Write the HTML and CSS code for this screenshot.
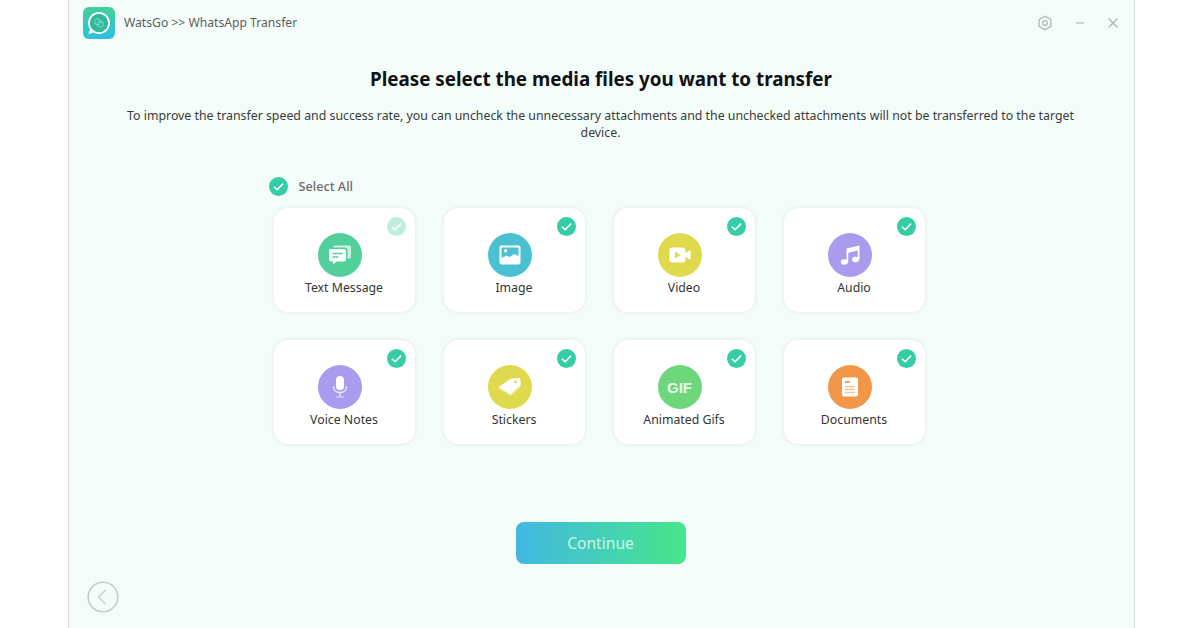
FILE: index.html
```html
<!DOCTYPE html>
<html lang="en">
<head>
    <meta charset="UTF-8">
    <meta name="viewport" content="width=device-width, initial-scale=1.0">
    <title>WatsGo</title>
    <link rel="stylesheet" href="styles.css">
</head>
<body>
    <div class="window">
        <!-- Title bar -->
        <header class="titlebar">
            <svg class="logo" width="32" height="32" viewBox="0 0 32 32">
                <defs>
                    <linearGradient id="logoGrad" x1="0" y1="0" x2="0" y2="1">
                        <stop offset="0" stop-color="#45cf96"/>
                        <stop offset="1" stop-color="#2cc0e0"/>
                    </linearGradient>
                </defs>
                <rect width="32" height="32" rx="6" fill="url(#logoGrad)"/>
                <path d="M16 5a11 11 0 1 1-5.400 20.600L5.500 27l1.500-4.800A11 11 0 0 1 16 5z" fill="#fff"/>
                <circle cx="16" cy="16" r="9.200" fill="#30b99a"/>
                <circle cx="14.600" cy="14.800" r="3" fill="none" stroke="#7fdcc4" stroke-width="1"/>
                <circle cx="17.400" cy="17.200" r="3" fill="none" stroke="#7fdcc4" stroke-width="1"/>
            </svg>
            <span class="app-name">WatsGo &gt;&gt; WhatsApp Transfer</span>
            <div class="window-controls">
                <svg width="16" height="16" viewBox="0 0 16 16" fill="none" stroke="#b4b9b7" stroke-width="1.4">
                    <path d="M8 1.2l5.9 3.4v6.8L8 14.8l-5.9-3.4V4.6z"/>
                    <circle cx="8" cy="8" r="2.4"/>
                </svg>
                <svg width="12" height="12" viewBox="0 0 12 12" stroke="#b9bebc" stroke-width="1.3">
                    <path d="M2 6h8"/>
                </svg>
                <svg width="12" height="12" viewBox="0 0 12 12" stroke="#aeb3b1" stroke-width="1.3">
                    <path d="M1.5 1.5l9 9M10.5 1.5l-9 9"/>
                </svg>
            </div>
        </header>

        <main class="content">
            <h1 class="heading">Please select the media files you want to transfer</h1>
            <p class="intro">To improve the transfer speed and success rate, you can uncheck the unnecessary attachments and the unchecked attachments will not be transferred to the target device.</p>

            <div class="picker">
                <label class="select-all">
                    <svg class="check" viewBox="0 0 20 20"><circle cx="10" cy="10" r="10" fill="#35cda5"/><path d="M5.2 10.2l3.4 3.2 6.2-6.4" fill="none" stroke="#fff" stroke-width="1.6"/></svg>
                    <span>Select All</span>
                </label>

                <div class="media-grid">
                    <div class="media-card">
                        <svg class="check" viewBox="0 0 20 20"><circle cx="10" cy="10" r="10" fill="#bdeee0"/><path d="M5.2 10.2l3.4 3.2 6.2-6.4" fill="none" stroke="#fff" stroke-width="1.6"/></svg>
                        <div class="media-icon bg-green">
                            <svg width="26" height="26" viewBox="0 0 26 26">
                                <path d="M8 3.500h14a2 2 0 0 1 2 2v9a2 2 0 0 1-2 2h-1.500v-8a3 3 0 0 0-3-3H6a2 2 0 0 1 2-2z" fill="#fff" opacity=".7"/>
                                <path d="M4 7h13a2 2 0 0 1 2 2v8.500a2 2 0 0 1-2 2H9.500L6 22.500v-3H4a2 2 0 0 1-2-2V9a2 2 0 0 1 2-2z" fill="#fff"/>
                                <path d="M5.500 11.500h10M5.500 15h6" stroke="#52cf9b" stroke-width="1.300"/>
                            </svg>
                        </div>
                        <span class="media-label">Text Message</span>
                    </div>

                    <div class="media-card">
                        <svg class="check" viewBox="0 0 20 20"><circle cx="10" cy="10" r="10" fill="#35cda5"/><path d="M5.2 10.2l3.4 3.2 6.2-6.4" fill="none" stroke="#fff" stroke-width="1.6"/></svg>
                        <div class="media-icon bg-teal">
                            <svg width="24" height="24" viewBox="0 0 24 24">
                                <rect x="1.500" y="2.500" width="21" height="19" rx="2" fill="#fff"/>
                                <path d="M3.500 4.500h17v8.500l-4-2-5 3-3-1.500-5 2.500z" fill="#49c1d2"/>
                                <circle cx="7.500" cy="7.800" r="1.700" fill="#fff"/>
                            </svg>
                        </div>
                        <span class="media-label">Image</span>
                    </div>

                    <div class="media-card">
                        <svg class="check" viewBox="0 0 20 20"><circle cx="10" cy="10" r="10" fill="#35cda5"/><path d="M5.2 10.2l3.4 3.2 6.2-6.4" fill="none" stroke="#fff" stroke-width="1.6"/></svg>
                        <div class="media-icon bg-yellow">
                            <svg width="24" height="24" viewBox="0 0 24 24">
                                <rect x="1.500" y="4.500" width="16" height="15" rx="3" fill="#fff"/>
                                <path d="M17 10.500l5.500-3.500v10L17 13.500z" fill="#fff"/>
                                <path d="M7 8.500l5.500 3.500L7 15.500z" fill="#dfd94e"/>
                            </svg>
                        </div>
                        <span class="media-label">Video</span>
                    </div>

                    <div class="media-card">
                        <svg class="check" viewBox="0 0 20 20"><circle cx="10" cy="10" r="10" fill="#35cda5"/><path d="M5.2 10.2l3.4 3.2 6.2-6.4" fill="none" stroke="#fff" stroke-width="1.6"/></svg>
                        <div class="media-icon bg-purple">
                            <svg width="24" height="24" viewBox="0 0 24 24">
                                <path d="M8.500 5.500L21.500 2.500v14h-1.800V7.500L10.300 9.800v9.700H8.500z" fill="#fff"/>
                                <ellipse cx="6.300" cy="19" rx="3.500" ry="2.700" fill="#fff"/>
                                <ellipse cx="17.500" cy="16.500" rx="3.500" ry="2.700" fill="#fff"/>
                            </svg>
                        </div>
                        <span class="media-label">Audio</span>
                    </div>

                    <div class="media-card">
                        <svg class="check" viewBox="0 0 20 20"><circle cx="10" cy="10" r="10" fill="#35cda5"/><path d="M5.2 10.2l3.4 3.2 6.2-6.4" fill="none" stroke="#fff" stroke-width="1.6"/></svg>
                        <div class="media-icon bg-purple">
                            <svg width="24" height="26" viewBox="0 0 24 26">
                                <rect x="8" y="2" width="8" height="14" rx="4" fill="#fff"/>
                                <path d="M5.500 12c0 4.200 2.800 6.500 6.500 6.500s6.500-2.300 6.500-6.500M12 18.500v4" fill="none" stroke="#fff" stroke-width="1.300" opacity=".8"/>
                                <path d="M8 23h8" stroke="#fff" stroke-width="1.300" opacity=".5"/>
                            </svg>
                        </div>
                        <span class="media-label">Voice Notes</span>
                    </div>

                    <div class="media-card">
                        <svg class="check" viewBox="0 0 20 20"><circle cx="10" cy="10" r="10" fill="#35cda5"/><path d="M5.2 10.2l3.4 3.2 6.2-6.4" fill="none" stroke="#fff" stroke-width="1.6"/></svg>
                        <div class="media-icon bg-yellow">
                            <svg width="26" height="26" viewBox="0 0 26 26">
                                <path d="M2 14.500L14.500 6l9-.500.500 7-10 9.500z" fill="#efeb9c"/>
                                <path d="M1.500 13L14 4.500l9-.500.500 7L13 20.500z" fill="#fff"/>
                                <circle cx="18.500" cy="8" r="1.400" fill="#dfd94e"/>
                            </svg>
                        </div>
                        <span class="media-label">Stickers</span>
                    </div>

                    <div class="media-card">
                        <svg class="check" viewBox="0 0 20 20"><circle cx="10" cy="10" r="10" fill="#35cda5"/><path d="M5.2 10.2l3.4 3.2 6.2-6.4" fill="none" stroke="#fff" stroke-width="1.6"/></svg>
                        <div class="media-icon bg-lime">
                            <span class="gif-text">GIF</span>
                        </div>
                        <span class="media-label">Animated Gifs</span>
                    </div>

                    <div class="media-card">
                        <svg class="check" viewBox="0 0 20 20"><circle cx="10" cy="10" r="10" fill="#35cda5"/><path d="M5.2 10.2l3.4 3.2 6.2-6.4" fill="none" stroke="#fff" stroke-width="1.6"/></svg>
                        <div class="media-icon bg-orange">
                            <svg width="22" height="22" viewBox="0 0 22 22">
                                <rect x="3" y="1.500" width="16" height="19" rx="2" fill="#fff"/>
                                <path d="M6 6h5" stroke="#f2964a" stroke-width="1.800"/>
                                <path d="M6 10.500h10M6 13.500h10M6 16.500h10" stroke="#f8c89c" stroke-width="1.300"/>
                            </svg>
                        </div>
                        <span class="media-label">Documents</span>
                    </div>
                </div>
            </div>

            <button class="continue-btn">Continue</button>
        </main>

        <button class="back-btn">
            <svg width="32" height="32" viewBox="0 0 32 32" fill="none" stroke="#c6cac8">
                <circle cx="16" cy="16" r="14.800" stroke-width="1.600"/>
                <path d="M18.500 9l-7 7 7 7" stroke-width="1.300"/>
            </svg>
        </button>
    </div>
</body>
</html>
```

FILE: styles.css
```css
body {
    margin: 0;
    height: 628px;
    overflow: hidden;
    background: #ffffff;
    font-family: "Noto Sans", sans-serif;
    display: flex;
    justify-content: center;
}

.window {
    position: relative;
    box-sizing: border-box;
    width: 1067px;
    height: 628px;
    margin-left: 3px;
    background: #f3fcf9;
    border-left: 1px solid #d9dedd;
    border-right: 1px solid #d9dedd;
}

/* Title bar */
.titlebar {
    display: flex;
    align-items: center;
    height: 45px;
    padding: 0 15px 0 14px;
}

.logo {
    margin-right: 9px;
}

.app-name {
    font-size: 12.15px;
    color: #5c5f5e;
}

.window-controls {
    display: flex;
    align-items: center;
    gap: 21px;
    margin-left: auto;
}

/* Main content */
.content {
    display: flex;
    flex-direction: column;
    align-items: center;
}

.heading {
    margin: 20px 1px 0 0;
    font-size: 18.8px;
    line-height: 28px;
    font-weight: 700;
    color: #111111;
}

.intro {
    width: 980px;
    margin: 14px 2px 0 0;
    font-size: 12.34px;
    line-height: 17px;
    color: #3a3c3b;
    text-align: center;
}

.picker {
    width: 654px;
    margin-top: 35px;
    margin-right: 4px;
}

.select-all {
    display: flex;
    align-items: center;
    gap: 11px;
    margin-left: -4px;
    height: 20px;
    font-size: 12.7px;
    font-weight: 500;
    color: #6a6d6c;
}

.check {
    width: 19px;
    height: 19px;
    flex: none;
}

.media-grid {
    display: grid;
    grid-template-columns: repeat(4, 143px);
    grid-auto-rows: 106px;
    gap: 26px 27px;
    margin-top: 11px;
}

.media-card {
    position: relative;
    box-sizing: border-box;
    display: flex;
    flex-direction: column;
    align-items: center;
    padding-top: 25px;
    background: #ffffff;
    border: 1px solid #eef2f0;
    border-radius: 15px;
    box-shadow: 0 0 3px rgba(0, 0, 0, 0.06);
}

.media-card .check {
    position: absolute;
    top: 9px;
    right: 9px;
}

.media-icon {
    width: 44px;
    height: 44px;
    margin-right: 9px;
    border-radius: 50%;
    display: flex;
    align-items: center;
    justify-content: center;
}

.bg-green { background: #52cf9b; }
.bg-teal { background: #49c1d2; }
.bg-yellow { background: #dfd94e; }
.bg-purple { background: #ab9bef; }
.bg-lime { background: #6fd77b; }
.bg-orange { background: #f2964a; }

.gif-text {
    font-family: "Liberation Sans", sans-serif;
    font-size: 15px;
    font-weight: 700;
    color: #e9faea;
}

.media-label {
    margin-top: 2px;
    font-size: 12.3px;
    line-height: 17px;
    color: #333535;
}

.continue-btn {
    width: 170px;
    height: 42px;
    margin-top: 77px;
    margin-right: 2px;
    border: none;
    border-radius: 8px;
    background: linear-gradient(90deg, #42b8e2, #47e68a);
    font-family: inherit;
    font-size: 15.6px;
    color: #c9f5e6;
}

.back-btn {
    position: absolute;
    left: 18px;
    bottom: 15px;
    padding: 0;
    height: 32px;
    border: none;
    background: none;
}
```
